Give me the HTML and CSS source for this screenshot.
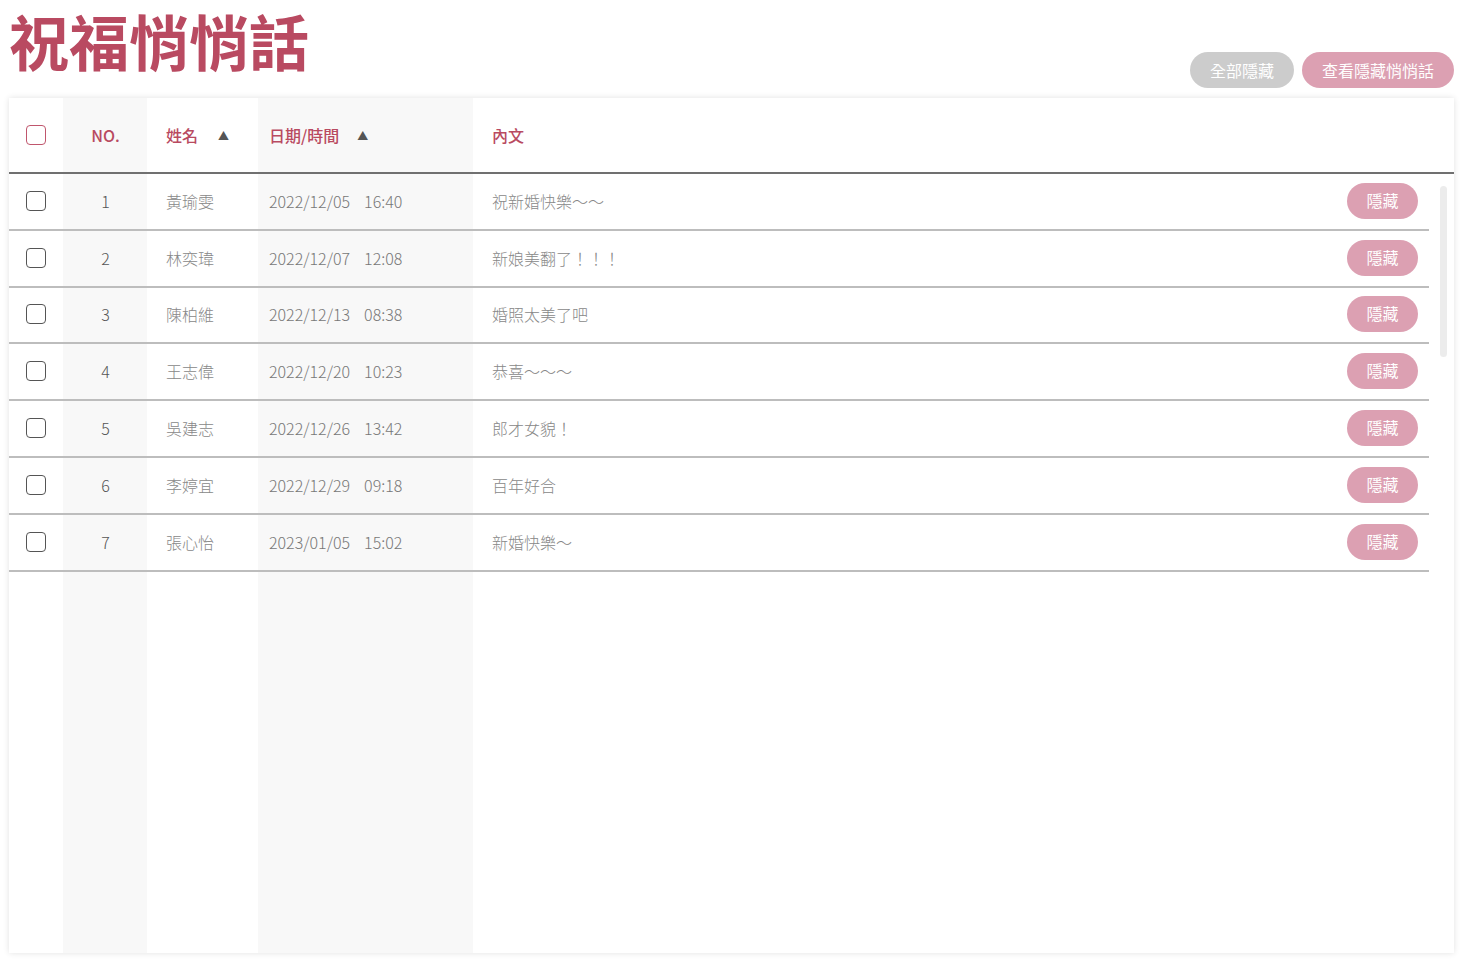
FILE: index.html
```html
<!DOCTYPE html>
<html lang="zh-Hant">
<head>
<meta charset="utf-8">
<title>祝福悄悄話</title>
<link rel="stylesheet" href="styles.css">
</head>
<body>
<div class="page">
  <header class="top">
    <h1 class="title">祝福悄悄話</h1>
    <div class="actions">
      <button class="pill pill-gray">全部隱藏</button>
      <button class="pill pill-pink">查看隱藏悄悄話</button>
    </div>
  </header>
  <section class="card">
    <div class="row head">
      <div class="c c-check"><span class="box box-pink"></span></div>
      <div class="c c-no">NO.</div>
      <div class="c c-name">姓名<span class="arrow">▲</span></div>
      <div class="c c-date">日期/時間<span class="arrow">▲</span></div>
      <div class="c c-text">內文</div>
    </div>
    <div class="body">
      <div class="rows">
        <div class="row item">
          <div class="c c-check"><span class="box"></span></div>
          <div class="c c-no">1</div>
          <div class="c c-name">黃瑜雯</div>
          <div class="c c-date">2022/12/05<span class="time">16:40</span></div>
          <div class="c c-text"><span class="msg">祝新婚快樂～～</span><button class="hide">隱藏</button></div>
        </div>
        <div class="row item">
          <div class="c c-check"><span class="box"></span></div>
          <div class="c c-no">2</div>
          <div class="c c-name">林奕瑋</div>
          <div class="c c-date">2022/12/07<span class="time">12:08</span></div>
          <div class="c c-text"><span class="msg">新娘美翻了！！！</span><button class="hide">隱藏</button></div>
        </div>
        <div class="row item">
          <div class="c c-check"><span class="box"></span></div>
          <div class="c c-no">3</div>
          <div class="c c-name">陳柏維</div>
          <div class="c c-date">2022/12/13<span class="time">08:38</span></div>
          <div class="c c-text"><span class="msg">婚照太美了吧</span><button class="hide">隱藏</button></div>
        </div>
        <div class="row item">
          <div class="c c-check"><span class="box"></span></div>
          <div class="c c-no">4</div>
          <div class="c c-name">王志偉</div>
          <div class="c c-date">2022/12/20<span class="time">10:23</span></div>
          <div class="c c-text"><span class="msg">恭喜～～～</span><button class="hide">隱藏</button></div>
        </div>
        <div class="row item">
          <div class="c c-check"><span class="box"></span></div>
          <div class="c c-no">5</div>
          <div class="c c-name">吳建志</div>
          <div class="c c-date">2022/12/26<span class="time">13:42</span></div>
          <div class="c c-text"><span class="msg">郎才女貌！</span><button class="hide">隱藏</button></div>
        </div>
        <div class="row item">
          <div class="c c-check"><span class="box"></span></div>
          <div class="c c-no">6</div>
          <div class="c c-name">李婷宜</div>
          <div class="c c-date">2022/12/29<span class="time">09:18</span></div>
          <div class="c c-text"><span class="msg">百年好合</span><button class="hide">隱藏</button></div>
        </div>
        <div class="row item">
          <div class="c c-check"><span class="box"></span></div>
          <div class="c c-no">7</div>
          <div class="c c-name">張心怡</div>
          <div class="c c-date">2023/01/05<span class="time">15:02</span></div>
          <div class="c c-text"><span class="msg">新婚快樂～</span><button class="hide">隱藏</button></div>
        </div>
        <div class="row filler">
          <div class="c c-check"></div>
          <div class="c c-no"></div>
          <div class="c c-name"></div>
          <div class="c c-date"></div>
          <div class="c c-text"></div>
        </div>
      </div>
      <div class="gutter"><div class="thumb"></div></div>
    </div>
  </section>
</div>
</body>
</html>
```
FILE: styles.css
```css
* { box-sizing: border-box; }
html, body { margin: 0; padding: 0; background: #fff; }
body {
  font-family: "Noto Sans CJK TC", "Noto Sans", sans-serif;
  color: #888;
  height: 962px;
  overflow: hidden;
}
.page {
  padding: 0 9px 0 9px;
  display: flex;
  flex-direction: column;
  height: 962px;
}
.top {
  display: flex;
  justify-content: space-between;
  align-items: flex-end;
  padding: 0 0 10px 0;
}
.title {
  margin: 0 0 8px 0;
  padding: 0 6px 0 0;
  font-size: 60px;
  line-height: 80px;
  font-weight: 700;
  color: #b94a61;
  white-space: nowrap;
}
.actions { display: flex; gap: 8px; }
.pill {
  height: 36px;
  border: none;
  border-radius: 18px;
  padding: 0 20px;
  font-family: inherit;
  font-size: 16px;
  color: #fff;
  line-height: 34px;
}
.pill-gray { background: #cccccc; }
.pill-pink { background: #dca0b2; }

.card {
  height: 855px;
  background: #fff;
  box-shadow: 0 0 6px rgba(0, 0, 0, 0.12);
  display: flex;
  flex-direction: column;
}
.row {
  display: grid;
  grid-template-columns: 54px 84px 111px 215px 1fr;
}
.c {
  display: flex;
  align-items: center;
  font-size: 16px;
}
.c-no { background: #f8f8f8; justify-content: center; padding-left: 1px; }
.c-date { background: #f8f8f8; padding-left: 11px; }
.c-check { justify-content: center; }
.c-name { padding-left: 19px; }
.c-text { padding-left: 19px; padding-right: 11px; justify-content: space-between; }

.head {
  height: 76px;
  border-bottom: 2px solid #707070;
}
.head .c {
  color: #b94a61;
  font-weight: 500;
  padding-bottom: 1px;
}
.head .c-date { padding-left: 11px; }
.arrow {
  color: #555;
  font-size: 11px;
  margin-left: 20px;
  font-weight: 400;
}
.head .c-date .arrow { margin-left: 18px; }

.body {
  flex: 1;
  display: flex;
}
.rows {
  flex: 1;
  display: flex;
  flex-direction: column;
}
.item {
  height: 56.8px;
  border-bottom: 2px solid #bdbdbd;
}
.item .c { font-weight: 300; padding-bottom: 1px; }
.item .c-no { color: #555; }
.item .c-date { color: #777; }
.filler { flex: 1; }
.time { margin-left: 14px; }
.msg { color: #888; }
.box {
  width: 20px;
  height: 20px;
  border: 1.5px solid #555;
  border-radius: 4px;
  background: #fff;
}
.box-pink { border-color: #c0566d; }
.hide {
  height: 36px;
  width: 71px;
  border: none;
  border-radius: 18px;
  background: #dca0b2;
  color: #fff;
  font-family: inherit;
  font-size: 16px;
  padding: 0 0 2px 0;
}
.gutter {
  width: 25px;
  padding: 12px 7px 0 11px;
}
.thumb {
  width: 7px;
  height: 171px;
  border-radius: 4px;
  background: #ececec;
}
```
